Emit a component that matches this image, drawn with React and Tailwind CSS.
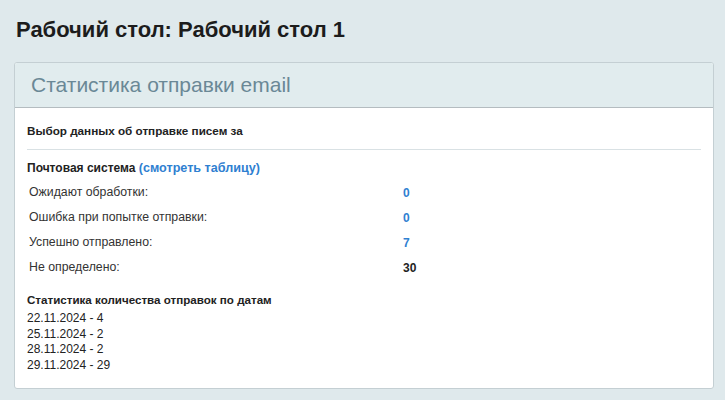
export default function App() {
  const rows = [
    { label: "Ожидают обработки:", value: "0", link: true },
    { label: "Ошибка при попытке отправки:", value: "0", link: true },
    { label: "Успешно отправлено:", value: "7", link: true },
    { label: "Не определено:", value: "30", link: false },
  ];

  const dates = ["22.11.2024 - 4", "25.11.2024 - 2", "28.11.2024 - 2", "29.11.2024 - 29"];

  return (
    <div
      className="min-h-screen bg-[#dfe9ec] pb-4 text-[#222]"
      style={{ fontFamily: '"Liberation Sans", Arial, sans-serif' }}
    >
      <h1 className="pl-4 pt-[18px] text-[22px] font-bold leading-6 text-[#1c1c1c]">
        Рабочий стол: Рабочий стол 1
      </h1>

      {/* Card */}
      <div className="ml-[14px] mt-5 w-[700px] overflow-hidden rounded-[3px] border border-[#c4cfd3] bg-white">
        <div className="flex h-[45px] items-center border-b border-[#b4bcc0] bg-[#e1ecee] px-4">
          <span className="text-[21px] leading-6 text-[#6a8896]">Статистика отправки email</span>
        </div>

        <div className="px-3 pb-[15px] pt-[15px] text-[12px]">
          <div className="text-[11.7px] font-bold leading-4">Выбор данных об отправке писем за</div>
          <div className="mt-[10px] h-px bg-[#d9e1e4]" />

          <div className="mt-[10px] text-[12px] font-bold leading-4">
            Почтовая система{" "}
            <a href="#" className="text-[12.6px] text-[#2f80d1]">
              (смотреть таблицу)
            </a>
          </div>

          <div className="mt-1 grid grid-cols-[376px_1fr]">
            {rows.map((r) => (
              <div key={r.label} className="contents">
                <div className="flex h-[25px] items-center pl-[2px] text-[12.3px] text-[#333]">{r.label}</div>
                <div className="flex h-[25px] items-center font-bold">
                  {r.link ? (
                    <a href="#" className="text-[#2f80d1]">
                      {r.value}
                    </a>
                  ) : (
                    <span className="text-[#222]">{r.value}</span>
                  )}
                </div>
              </div>
            ))}
          </div>

          <div className="mt-3 text-[11.6px] font-bold leading-4">Статистика количества отправок по датам</div>
          <div className="mt-[3px] leading-[15.5px]">
            {dates.map((d) => (
              <div key={d}>{d}</div>
            ))}
          </div>
        </div>
      </div>
    </div>
  );
}
